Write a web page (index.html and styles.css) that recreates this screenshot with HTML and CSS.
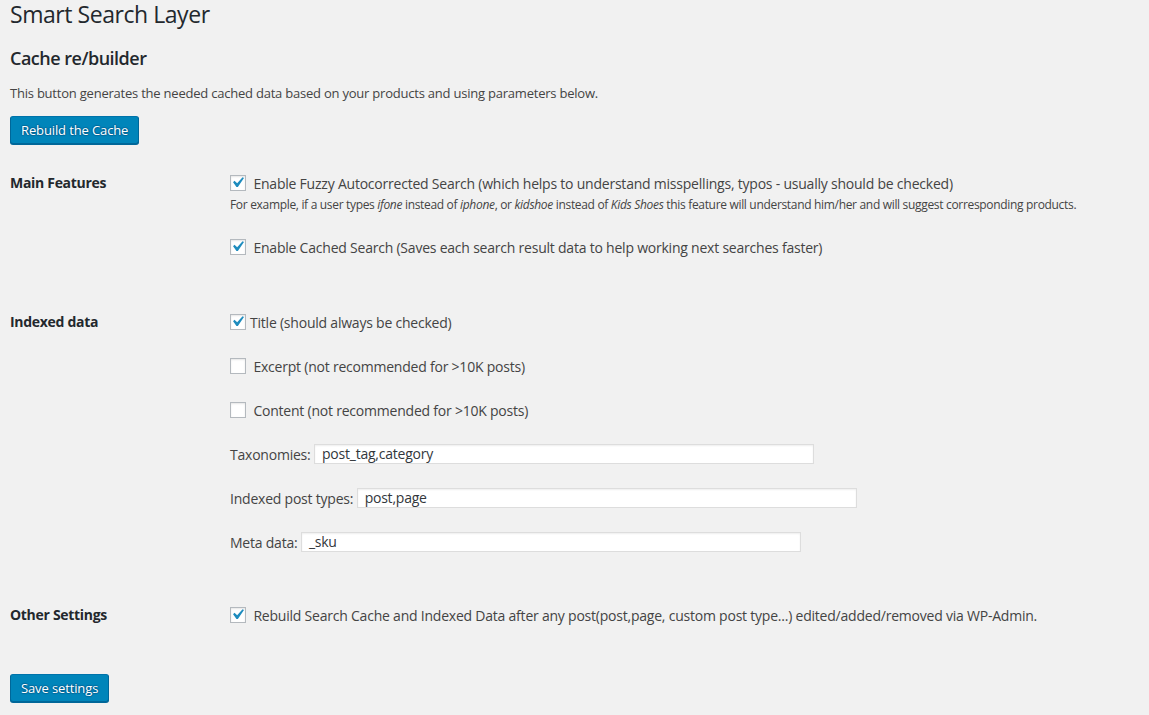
FILE: index.html
```html
<!DOCTYPE html>
<html>
<head>
<meta charset="utf-8">
<title>Smart Search Layer</title>
<link rel="stylesheet" href="styles.css">
</head>
<body>
<div class="wrap">
  <h1 class="page-title">Smart Search Layer</h1>
  <h2 class="section-title">Cache re/builder</h2>
  <p class="intro">This button generates the needed cached data based on your products and using parameters below.</p>
  <button class="button-primary" type="button">Rebuild the Cache</button>

  <div class="form-table">
    <div class="row row-main">
      <div class="th">Main Features</div>
      <div class="td">
        <div class="line"><span class="cb checked"><svg viewBox="0 0 20 20"><path d="M14.83 4.89l1.34.94-5.81 8.38H9.02L5.78 9.67l1.34-1.25 2.57 2.4z"/></svg></span> Enable Fuzzy Autocorrected Search (which helps to understand misspellings, typos - usually should be checked)</div>
        <div class="description">For example, if a user types <i>ifone</i> instead of <i>iphone</i>, or <i>kidshoe</i> instead of <i>Kids Shoes</i> this feature will understand him/her and will suggest corresponding products.</div>
        <div class="line line-second"><span class="cb checked"><svg viewBox="0 0 20 20"><path d="M14.83 4.89l1.34.94-5.81 8.38H9.02L5.78 9.67l1.34-1.25 2.57 2.4z"/></svg></span> Enable Cached Search (Saves each search result data to help working next searches faster)</div>
      </div>
    </div>

    <div class="row row-indexed">
      <div class="th">Indexed data</div>
      <div class="td">
        <div class="line"><span class="cb checked"><svg viewBox="0 0 20 20"><path d="M14.83 4.89l1.34.94-5.81 8.38H9.02L5.78 9.67l1.34-1.25 2.57 2.4z"/></svg></span>Title (should always be checked)</div>
        <div class="line spaced"><span class="cb"></span> Excerpt (not recommended for &gt;10K posts)</div>
        <div class="line spaced"><span class="cb"></span> Content (not recommended for &gt;10K posts)</div>
        <div class="line spaced">Taxonomies: <span class="input">post_tag,category</span></div>
        <div class="line spaced">Indexed post types: <span class="input">post,page</span></div>
        <div class="line spaced">Meta data: <span class="input">_sku</span></div>
      </div>
    </div>

    <div class="row row-other">
      <div class="th">Other Settings</div>
      <div class="td">
        <div class="line"><span class="cb checked"><svg viewBox="0 0 20 20"><path d="M14.83 4.89l1.34.94-5.81 8.38H9.02L5.78 9.67l1.34-1.25 2.57 2.4z"/></svg></span> Rebuild Search Cache and Indexed Data after any post(post,page, custom post type...) edited/added/removed via WP-Admin.</div>
      </div>
    </div>
  </div>

  <button class="button-primary save" type="button">Save settings</button>
</div>
</body>
</html>
```

FILE: styles.css
```css
html, body {
  margin: 0;
  padding: 0;
  background: #f1f1f1;
}
body {
  font-family: "Open Sans", "Noto Sans", sans-serif;
  color: #444;
  font-size: 13px;
  height: 715px;
  overflow: hidden;
}
.wrap {
  padding: 0 0 0 10px;
}
.page-title {
  margin: 0;
  padding: 0;
  font-size: 23px;
  font-weight: 400;
  line-height: 29px;
  letter-spacing: -0.45px;
  color: #23282d;
}
.section-title {
  margin: 17px 0 0;
  font-size: 18px;
  font-weight: 600;
  line-height: 24px;
  letter-spacing: -0.5px;
  color: #23282d;
}
.intro {
  margin: 13px 0 0;
  font-size: 13px;
  line-height: 20px;
  letter-spacing: -0.22px;
  color: #444;
}
.button-primary {
  display: block;
  margin: 13px 0 0;
  height: 28px;
  padding: 0 10px 1px;
  font-family: inherit;
  font-size: 13px;
  line-height: 26px;
  letter-spacing: -0.12px;
  color: #fff;
  background: #0085ba;
  border: 1px solid #0073aa;
  border-color: #0073aa #006799 #006799;
  border-radius: 3px;
  box-shadow: 0 1px 0 #006799;
  text-shadow: 0 -1px 1px #006799, 1px 0 1px #006799, 0 1px 1px #006799, -1px 0 1px #006799;
  cursor: pointer;
}
.form-table {
  display: flex;
  flex-direction: column;
}
.row {
  display: flex;
  align-items: flex-start;
}
.row-main { margin-top: 28px; }
.row-indexed { margin-top: 53px; }
.row-other { margin-top: 51px; }
.th {
  width: 220px;
  flex: none;
  font-size: 14px;
  font-weight: 700;
  line-height: 21px;
  letter-spacing: -0.3px;
  color: #23282d;
}
.td {
  flex: 1;
  font-size: 14px;
  letter-spacing: -0.22px;
  color: #444;
}
.line {
  display: flex;
  align-items: center;
  height: 22px;
  white-space: pre;
}
.line-second { margin-top: 23px; }
.spaced { margin-top: 22px; }
.description {
  margin-top: 3px;
  font-size: 12px;
  line-height: 16px;
  letter-spacing: -0.32px;
  color: #444;
}
.cb {
  position: relative;
  display: inline-block;
  width: 16px;
  height: 16px;
  margin-right: 4px;
  box-sizing: border-box;
  border: 1px solid #b4b9be;
  background: #fff;
  box-shadow: inset 0 1px 2px rgba(0,0,0,.1);
  flex: none;
}
.cb svg {
  position: absolute;
  left: -4px;
  top: -4px;
  width: 21px;
  height: 21px;
  fill: #1e8cbe;
}
.input {
  display: inline-block;
  box-sizing: border-box;
  width: 500px;
  height: 20px;
  padding: 0 7px;
  line-height: 18px;
  background: #fff;
  border: 1px solid #ddd;
  box-shadow: inset 0 1px 2px rgba(0,0,0,.07);
  color: #32373c;
  font-size: 14px;
}
.save {
  margin-top: 48px;
}
```
